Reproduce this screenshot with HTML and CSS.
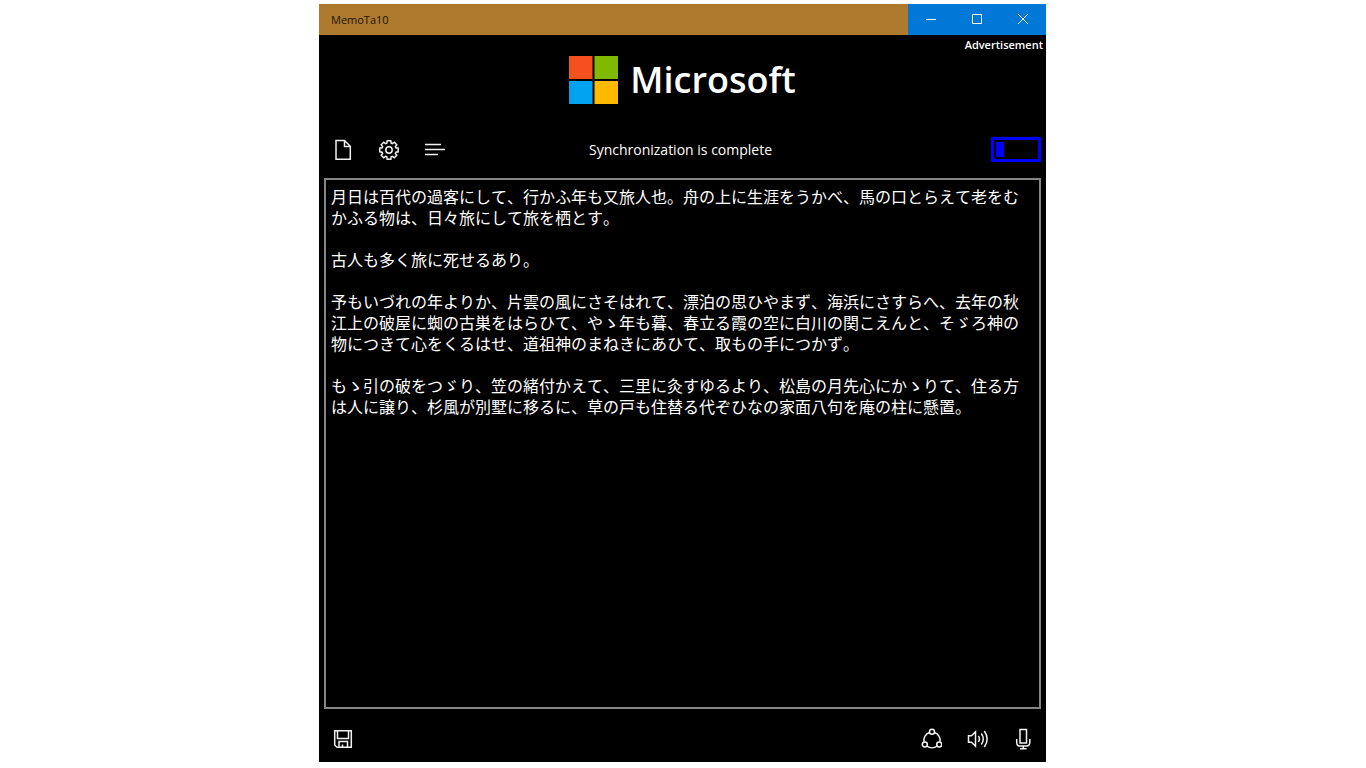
FILE: index.html
```html
<!DOCTYPE html>
<html lang="en">
<head>
<meta charset="utf-8">
<meta name="viewport" content="width=device-width, initial-scale=1">
<title>MemoTa10</title>
<link rel="stylesheet" href="styles.css">
</head>
<body class="desktop">
<div class="window">
  <header class="titlebar">
    <h1 class="titlebar-name">MemoTa10</h1>
    <div class="caption-buttons">
      <button class="caption-button" type="button" aria-label="Minimize"><svg class="caption-icon" viewBox="0 0 10 11"><path d="M0 5.5H10"/></svg></button>
      <button class="caption-button" type="button" aria-label="Maximize"><svg class="caption-icon" viewBox="0 0 10 11"><path d="M.5 .5H9.5V9.5H.5Z"/></svg></button>
      <button class="caption-button" type="button" aria-label="Close"><svg class="caption-icon" viewBox="0 0 10 11"><path d="M0 0L10 10M10 0L0 10"/></svg></button>
    </div>
  </header>

  <section class="ad" aria-label="Advertisement">
    <a class="ad-link" href="#">
      <svg class="ad-logo" viewBox="0 0 49 48" aria-hidden="true">
        <path fill="#f4511f" d="M0 0H23.5V23H0Z"/>
        <path fill="#7fb900" d="M25.500 0H49V23H25.500Z"/>
        <path fill="#00a3ef" d="M0 25H23.5V48H0Z"/>
        <path fill="#ffb900" d="M25.500 25H49V48H25.500Z"/>
      </svg>
      <span class="ad-brand">Microsoft</span>
    </a>
    <span class="ad-label">Advertisement</span>
  </section>

  <div class="toolbar">
    <div class="tools">
      <button class="tool" type="button" aria-label="New memo"><svg class="icon" viewBox="0 0 22 22"><path d="M4 1.500H12.500L18.300 7.200V20.300H4ZM12.500 1.500V7.500H18.300"/></svg></button>
      <button class="tool" type="button" aria-label="Settings"><svg class="icon" viewBox="0 0 22 22"><path d="M9.200 1.800H12.800L13.200 4.100L14.400 4.600L16.300 3.200L18.800 5.700L17.400 7.600L17.900 8.800L20.200 9.200V12.800L17.900 13.200L17.400 14.400L18.800 16.300L16.300 18.800L14.400 17.400L13.200 17.900L12.800 20.200H9.200L8.800 17.900L7.600 17.400L5.700 18.800L3.200 16.300L4.600 14.400L4.100 13.200L1.800 12.800V9.200L4.100 8.800L4.600 7.600L3.200 5.700L5.700 3.200L7.600 4.600L8.800 4.100Z"/><circle cx="11" cy="11" r="3.200"/></svg></button>
      <button class="tool" type="button" aria-label="Memo list"><svg class="icon" viewBox="0 0 22 22"><path d="M1 5.500H17M1 10.500H21M1 15.500H14"/></svg></button>
    </div>
    <p class="status" role="status">Synchronization is complete</p>
    <progress class="usage" max="100" value="20" aria-label="Memo usage"></progress>
  </div>

  <textarea class="memo" lang="ja" aria-label="Memo" spellcheck="false">月日は百代の過客にして、行かふ年も又旅人也。舟の上に生涯をうかべ、馬の口とらえて老をむかふる物は、日々旅にして旅を栖とす。

古人も多く旅に死せるあり。

予もいづれの年よりか、片雲の風にさそはれて、漂泊の思ひやまず、海浜にさすらへ、去年の秋江上の破屋に蜘の古巣をはらひて、やゝ年も暮、春立る霞の空に白川の関こえんと、そゞろ神の物につきて心をくるはせ、道祖神のまねきにあひて、取もの手につかず。

もゝ引の破をつゞり、笠の緒付かえて、三里に灸すゆるより、松島の月先心にかゝりて、住る方は人に譲り、杉風が別墅に移るに、草の戸も住替る代ぞひなの家面八句を庵の柱に懸置。</textarea>

  <footer class="bottombar">
    <button class="tool" type="button" aria-label="Save"><svg class="icon" viewBox="0 0 22 22"><path d="M2.700 2.700H19.300V19.300H5L2.700 17V2.700ZM5.500 2.700V10.500H16.500V2.700M7 19.300V13.500H15.500V19.300M10.500 19.300V16.500"/></svg></button>
    <div class="tools">
      <button class="tool" type="button" aria-label="Share"><svg class="icon" viewBox="0 0 22 22"><circle cx="12" cy="3.700" r="2.500"/><circle cx="4.800" cy="16.500" r="2.500"/><circle cx="19.200" cy="16.500" r="2.500"/><path d="M9.500 4.500A8.500 8.500 0 0 0 4 14M14.500 4.500A8.500 8.500 0 0 1 20 14M6.800 18A8.500 8.500 0 0 0 17.200 18"/></svg></button>
      <button class="tool" type="button" aria-label="Read aloud"><svg class="icon" viewBox="0 0 22 22"><path d="M2.500 7.700H5.500L9.500 3.700V18.300L5.500 14.300H2.500ZM12.300 8Q14.700 11 12.300 14M15.300 5.500Q19.200 11 15.300 16.500M18.300 3Q24 11 18.300 19"/></svg></button>
      <button class="tool" type="button" aria-label="Dictate"><svg class="icon" viewBox="0 0 22 22"><path d="M8 1.500H14.500V15H8ZM4.700 11V14.500Q4.700 18 8 18H14.500Q17.800 18 17.800 14.500V11M11.250 18V20.700M8 20.700H14.500"/></svg></button>
    </div>
  </footer>
</div>
</body>
</html>
```
FILE: styles.css
```css
* {
  box-sizing: border-box;
}

.desktop {
  display: grid;
  grid-template-columns: 319fr 727fr 320fr;
  min-height: 100vh;
  margin: 0;
  padding: 4px 0 6px;
  background: #fff;
  color: #fff;
  font-family: "Open Sans", "Noto Sans", sans-serif;
}

.window {
  grid-column: 2;
  display: flex;
  flex-direction: column;
  min-width: 0;
  background: #000;
}

.titlebar {
  display: flex;
  align-items: center;
  justify-content: space-between;
  padding-left: 12px;
  background: #ad7a2e;
}

.titlebar-name {
  margin: 0;
  color: #1c1408;
  font-size: 11px;
  font-weight: 400;
  line-height: 16px;
}

.caption-buttons {
  display: flex;
}

.caption-button {
  display: grid;
  place-items: center;
  width: 46px;
  height: 31px;
  padding: 0;
  border: 0;
  background: #0078d7;
}

.caption-icon {
  width: 10px;
  height: 11px;
  fill: none;
  stroke: #fff;
}

.ad {
  position: relative;
  display: flex;
  justify-content: center;
  align-items: center;
  height: 90px;
}

.ad-link {
  display: flex;
  align-items: center;
  gap: 12px;
  color: #fff;
  text-decoration: none;
}

.ad-logo {
  width: 49px;
  height: 48px;
}

.ad-brand {
  font-size: 36px;
  font-weight: 600;
  line-height: 48px;
}

.ad-label {
  position: absolute;
  top: 2px;
  right: 3px;
  font-size: 11px;
  font-weight: 600;
  line-height: 16px;
}

.toolbar {
  display: grid;
  grid-template-columns: 1fr auto 1fr;
  align-items: center;
  padding: 0 5px 5px 1px;
}

.tools {
  display: flex;
}

.tool {
  display: grid;
  place-items: center;
  width: 46px;
  height: 48px;
  padding: 2px 0 0;
  border: 0;
  background: none;
  color: #fff;
}

.icon {
  width: 22px;
  height: 22px;
  fill: none;
  stroke: #f2f2f2;
  stroke-width: 1.5;
}

.status {
  margin: 0;
  font-size: 14px;
}

.usage {
  justify-self: end;
  appearance: none;
  width: 50px;
  height: 25px;
  padding: 2px;
  border: 3px solid #00f;
  background: #000;
}

.usage::-webkit-progress-bar {
  background: #000;
}

.usage::-webkit-progress-value {
  background: #00f;
}

.memo {
  flex: 1;
  margin: 0 5px;
  padding: 6px 16px 6px 5px;
  border: 2px solid #858585;
  outline: 0;
  background: #000;
  color: #fff;
  font-family: "Noto Sans CJK JP", sans-serif;
  font-size: 16px;
  font-weight: 400;
  font-kerning: none;
  line-height: 21px;
  resize: none;
}

.bottombar {
  display: flex;
  justify-content: space-between;
  padding: 5px 0 0 1px;
}
```
